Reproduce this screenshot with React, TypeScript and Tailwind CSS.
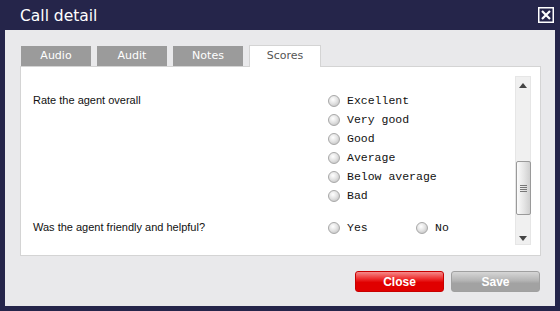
import React from "react";

const tabs = ["Audio", "Audit", "Notes", "Scores"];
const ratings = ["Excellent", "Very good", "Good", "Average", "Below average", "Bad"];

function Radio() {
  return (
    <span className="inline-block h-[12px] w-[12px] shrink-0 rounded-full border border-[#a8a8a8] bg-[radial-gradient(circle_at_40%_35%,#ffffff_0%,#e4e4e4_45%,#b9b9b9_100%)]" />
  );
}

function Option({ label, width }: { label: string; width?: string }) {
  return (
    <div className={`flex h-[19px] items-center gap-[7px] ${width ?? ""}`}>
      <Radio />
      <span className="font-['Liberation_Mono',monospace] text-[11.5px] text-[#111]">{label}</span>
    </div>
  );
}

function Scrollbar() {
  return (
    <div className="flex h-[169px] w-[16px] flex-col items-center border border-[#e6e6e6] bg-[#f0f0f0]">
      <svg width="8" height="5" viewBox="0 0 8 5" className="mt-[6px]">
        <path d="M4 0 L8 5 L0 5 Z" fill="#444" />
      </svg>
      <div className="mt-[73px] flex h-[54px] w-[15px] items-center justify-center rounded-[2px] border border-[#9a9a9a] bg-[linear-gradient(to_right,#fbfbfb,#e2e2e2_60%,#cfcfcf)]">
        <svg width="7" height="7" viewBox="0 0 7 7">
          <path d="M0 0.5 H7 M0 2.5 H7 M0 4.5 H7 M0 6.5 H7" stroke="#777" strokeWidth="1" />
        </svg>
      </div>
      <svg width="8" height="5" viewBox="0 0 8 5" className="mt-[21px]">
        <path d="M0 0 L8 0 L4 5 Z" fill="#444" />
      </svg>
    </div>
  );
}

export default function App() {
  return (
    <div className="flex h-[311px] w-[560px] flex-col bg-[#25254a]">
      {/* Title bar */}
      <div className="flex h-[30px] shrink-0 items-center justify-between pl-[20px] pr-[6px]">
        <span className="mt-[3px] font-['DejaVu_Sans',sans-serif] text-[15.5px] leading-none text-white">Call detail</span>
        <svg width="16" height="16" viewBox="0 0 16 16" className="mt-[-1px]">
          <rect x="0.75" y="0.75" width="14.5" height="14.5" fill="none" stroke="#fff" strokeWidth="1.5" />
          <path d="M4 4 L12 12 M12 4 L4 12" stroke="#fff" strokeWidth="2.2" />
        </svg>
      </div>

      {/* Body */}
      <div className="mx-[5px] flex h-[276px] flex-col bg-[#e9e9eb] pl-[15px] pr-[14px] pt-[15px]">
        <div className="flex h-[21px] items-end gap-[6px] pl-[1px]">
          {tabs.map((t) =>
            t === "Scores" ? (
              <div
                key={t}
                className="relative top-[1px] flex h-[22px] w-[72px] items-center justify-center border border-b-0 border-[#d4d4d4] bg-white font-['DejaVu_Sans',sans-serif] text-[11px] text-[#555]"
              >
                {t}
              </div>
            ) : (
              <div
                key={t}
                className="flex h-[20px] w-[70px] items-center justify-center bg-[#9b9b9b] font-['DejaVu_Sans',sans-serif] text-[11px] text-white"
              >
                {t}
              </div>
            )
          )}
        </div>

        <div className="flex h-[190px] border border-[#d4d4d4] bg-white">
          <div className="flex flex-1 flex-col pl-[12px] pt-[24px] font-['Liberation_Sans',Arial,sans-serif] text-[11px] text-[#111]">
            <div className="flex">
              <div className="w-[295px] leading-[19px]">Rate the agent overall</div>
              <div className="flex flex-col">
                {ratings.map((r) => (
                  <Option key={r} label={r} />
                ))}
              </div>
            </div>
            <div className="mt-[13px] flex">
              <div className="w-[295px] leading-[19px]">Was the agent friendly and helpful?</div>
              <div className="flex">
                <Option label="Yes" width="w-[88px]" />
                <Option label="No" />
              </div>
            </div>
          </div>
          <div className="pr-[9px] pt-[9px]">
            <Scrollbar />
          </div>
        </div>

        <div className="mt-[15px] flex justify-end gap-[7px] pr-[1px]">
          <button className="h-[21px] w-[89px] rounded-[3px] border border-[#c80000] bg-[linear-gradient(to_bottom,#f58a8a_0%,#ee3030_35%,#e00000_55%,#e00000_100%)] font-['Liberation_Sans',Arial,sans-serif] text-[12px] font-bold text-white">
            Close
          </button>
          <button className="h-[21px] w-[89px] rounded-[3px] border border-[#a0a0a0] bg-[linear-gradient(to_bottom,#d6d6d6_0%,#b4b4b4_45%,#a2a2a2_60%,#a2a2a2_100%)] font-['Liberation_Sans',Arial,sans-serif] text-[12px] font-bold text-white">
            Save
          </button>
        </div>
      </div>
    </div>
  );
}
